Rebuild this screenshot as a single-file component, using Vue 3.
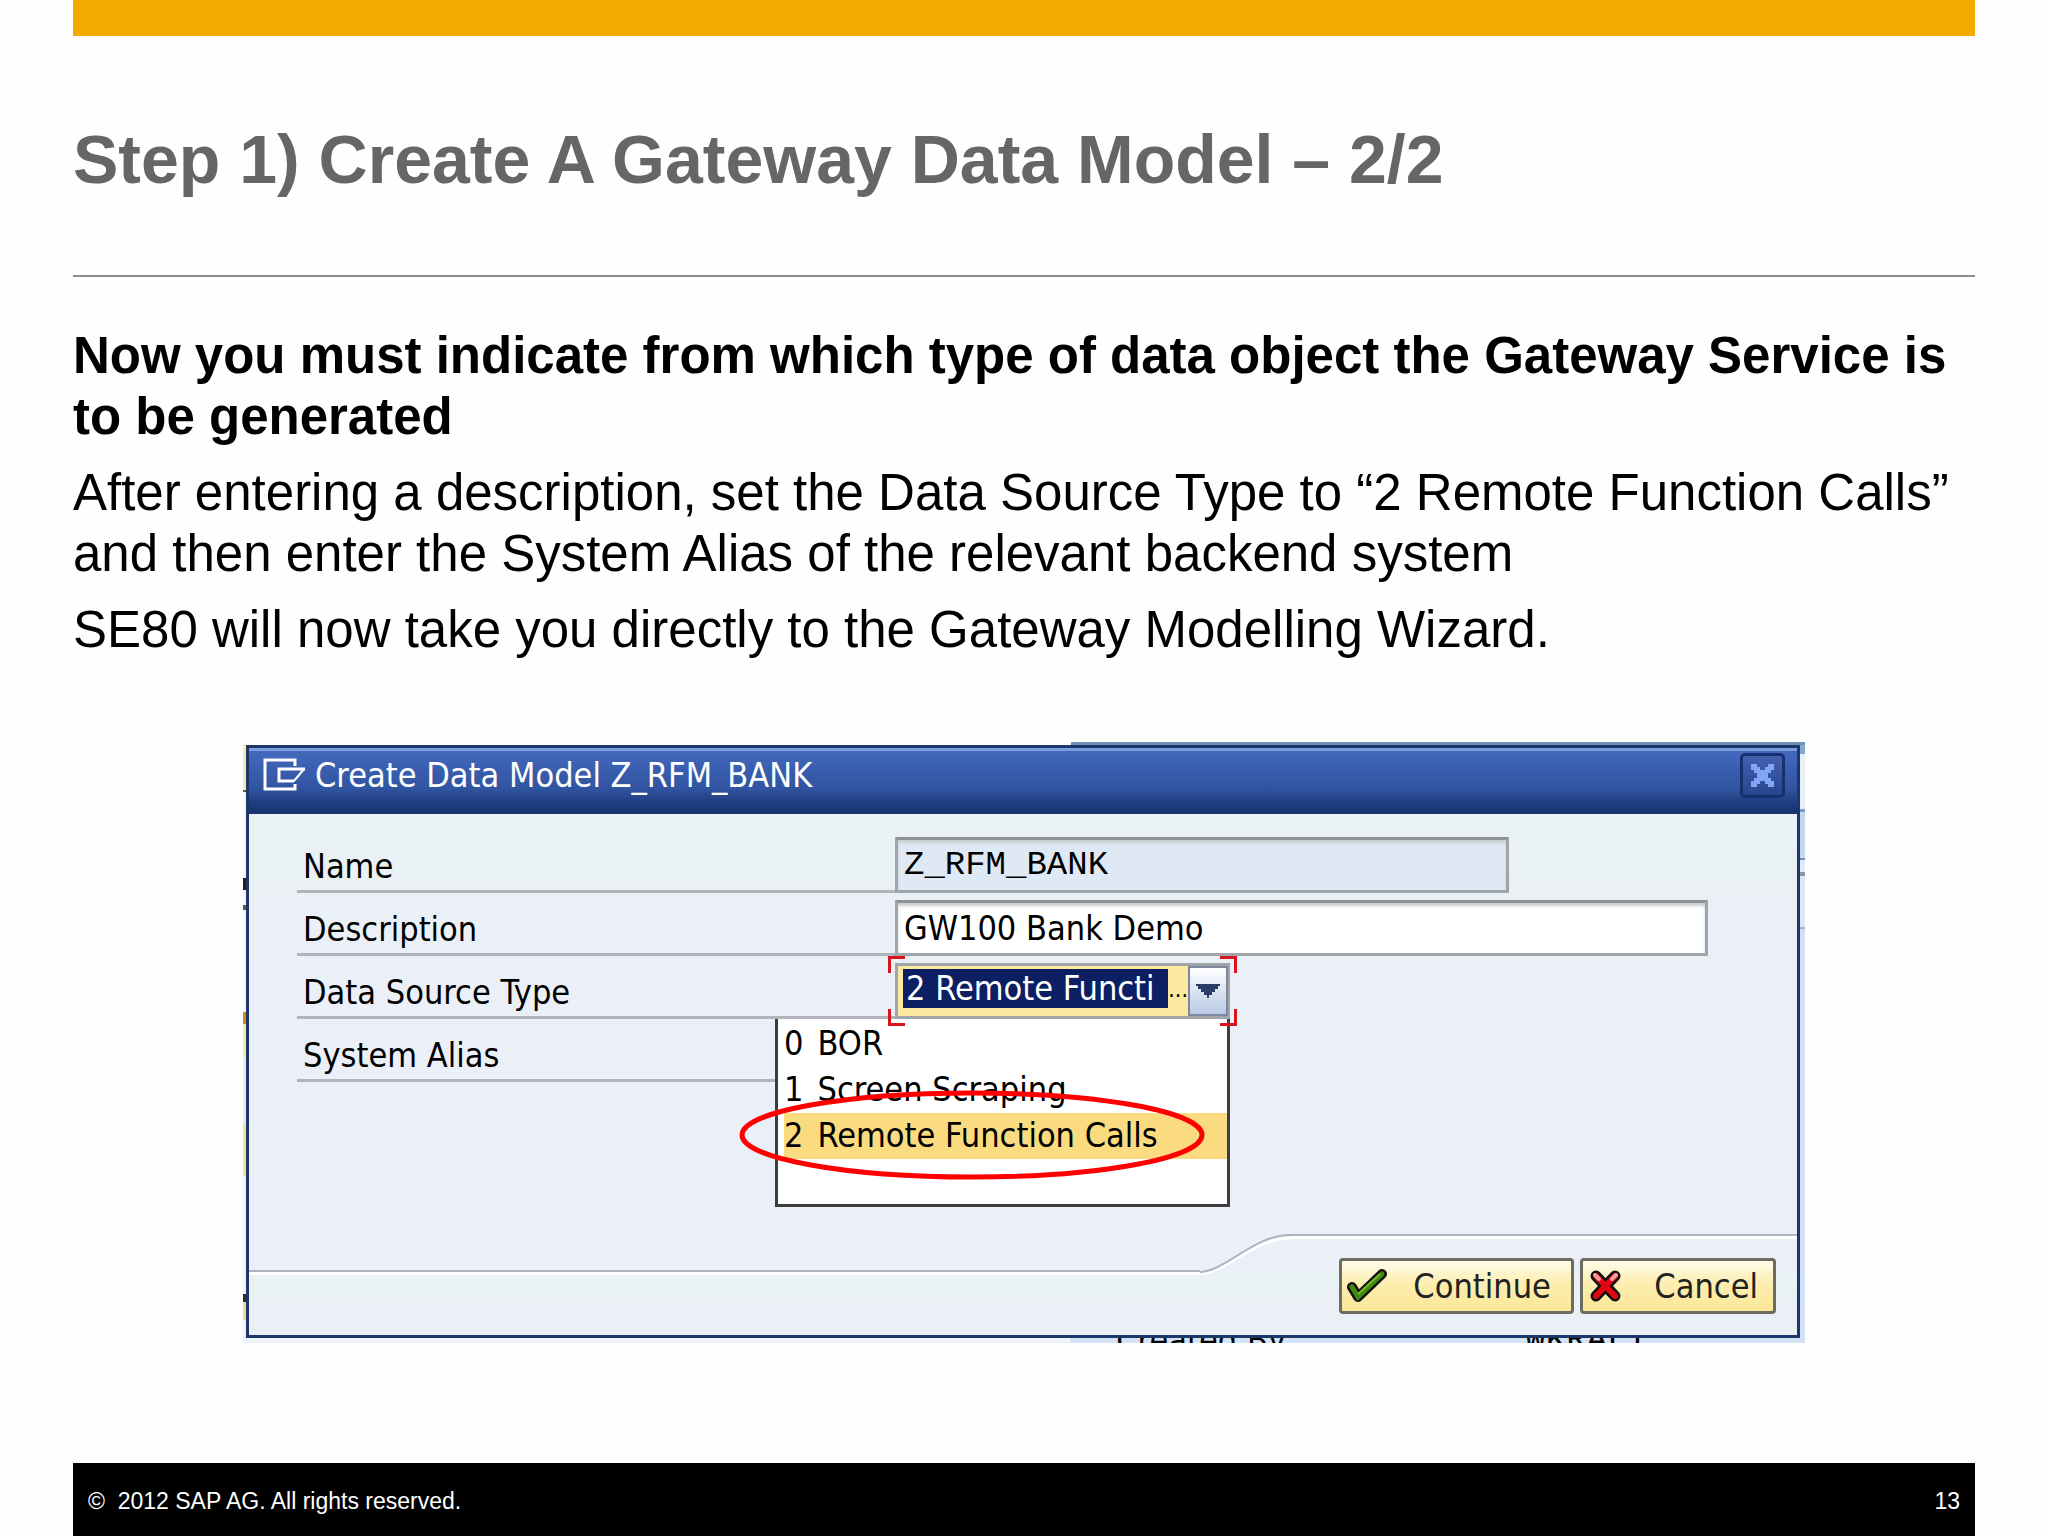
<script setup>
import { ref } from 'vue'

const name = ref('Z_RFM_BANK')
const description = ref('GW100 Bank Demo')
const sourceType = ref('2')
const options = [
  { code: '0', label: 'BOR' },
  { code: '1', label: 'Screen Scraping' },
  { code: '2', label: 'Remote Function Calls' },
]
</script>

<template>
  <main class="slide">
    <div class="accent"></div>
    <header class="heading">
      <h1>Step 1) Create A Gateway Data Model – 2/2</h1>
    </header>

    <section class="copy">
      <p class="lead">Now you must indicate from which type of data object the Gateway Service is to be generated</p>
      <p>After entering a description, set the Data Source Type to “2 Remote Function Calls” and then enter the System Alias of the relevant backend system</p>
      <p>SE80 will now take you directly to the Gateway Modelling Wizard.</p>
    </section>

    <div class="backdrop">
      <form class="dialog" @submit.prevent>
        <div class="titlebar">
          <svg class="glyph" width="42" height="34" viewBox="0 0 42 34" aria-hidden="true">
            <path d="M32 8V2H2v29h30v-5" fill="none" stroke="#fff" stroke-width="3" />
            <path d="M42 11H16v12h15" fill="none" stroke="#fff" stroke-width="3" />
            <path d="M41 11L31 23" fill="none" stroke="#fff" stroke-width="2" />
          </svg>
          <h2>Create Data Model Z_RFM_BANK</h2>
          <button type="button" class="close" aria-label="Close">
            <svg width="23" height="23" viewBox="0 0 23 23" aria-hidden="true">
              <path d="M0 0h6v3h3v3h5v-3h3v-3h6v6h-3v3h-3v5h3v3h3v6h-6v-3h-3v-3h-5v3h-3v3h-6v-6h3v-3h3v-5h-3v-3h-3z" fill="#83a5f8" />
            </svg>
          </button>
        </div>

        <div class="body">
          <div class="row">
            <label for="name">Name</label>
            <input id="name" v-model="name" class="field mono" type="text" readonly />
          </div>
          <div class="row">
            <label for="description">Description</label>
            <input id="description" v-model="description" class="field wide" type="text" />
          </div>
          <div class="row">
            <label for="source">Data Source Type</label>
            <div class="combo">
              <select id="source" v-model="sourceType">
                <option value="2">2 Remote Functi</option>
              </select>
              <span class="dots" aria-hidden="true">...</span>
              <span class="arrow" aria-hidden="true">
                <svg width="24" height="14" viewBox="0 0 24 14"><path d="M0 0h24v2h-2v3h-3v3h-3v3h-3v3h-2v-3h-3v-3h-3v-3h-3v-3h-2z" fill="#2b3d69" /></svg>
              </span>
              <i class="corner tl"></i><i class="corner tr"></i><i class="corner bl"></i><i class="corner br"></i>
              <div class="menu">
                <ul role="listbox" aria-label="Data Source Type">
                  <li v-for="o in options" :key="o.code" role="option" :aria-selected="o.code === sourceType" :class="{ chosen: o.code === sourceType }">
                    <span>{{ o.code }}</span><span>{{ o.label }}</span>
                  </li>
                </ul>
                <svg class="ring" width="466" height="90" viewBox="0 0 466 90" aria-hidden="true">
                  <ellipse cx="233" cy="45" rx="230" ry="42" fill="none" stroke="#f00" stroke-width="5" />
                </svg>
              </div>
            </div>
          </div>
          <div class="row">
            <span class="label">System Alias</span>
          </div>
        </div>

        <div class="actions">
          <div class="low"></div>
          <svg class="slope" width="90" height="42" viewBox="0 0 90 42" aria-hidden="true">
            <path d="M0 40C24 40 54 4 90 4" fill="none" stroke="#fff" stroke-width="3" />
            <path d="M0 38C24 38 54 1 90 1" fill="none" stroke="#adb4bf" stroke-width="2" />
          </svg>
          <div class="high">
            <button type="submit" class="btn primary">
              <svg width="40" height="34" viewBox="0 0 40 34" aria-hidden="true">
                <path d="M5 18l6 10L35 5" fill="none" stroke="#111" stroke-width="10" stroke-linejoin="round" stroke-linecap="round" />
                <path d="M5 18l6 10L35 5" fill="none" stroke="#3f8a10" stroke-width="5" stroke-linecap="round" />
                <path d="M11 25L33 5" fill="none" stroke="#76b82a" stroke-width="2" />
              </svg>
              <span>Continue</span>
            </button>
            <button type="button" class="btn">
              <svg width="40" height="34" viewBox="0 0 40 34" aria-hidden="true">
                <path d="M8 7l19 20M27 7L8 27" stroke="#111" stroke-width="11" stroke-linecap="round" />
                <path d="M8 7l19 20M27 7L8 27" stroke="#e30613" stroke-width="6" stroke-linecap="round" />
                <path d="M7 6l4 4M28 6l-4 4" stroke="#f79a9a" stroke-width="4" stroke-linecap="round" />
              </svg>
              <span>Cancel</span>
            </button>
          </div>
        </div>
      </form>
      <div class="peek" aria-hidden="true">
        <span>Created By</span>
        <span class="user">WKRALT</span>
      </div>
    </div>

    <footer class="footer">
      <span>©&nbsp; 2012 SAP AG. All rights reserved.</span>
      <span>13</span>
    </footer>
  </main>
</template>

<style>
body {
  margin: 0;
  background: #fefefe;
}
</style>

<style scoped>
.slide {
  box-sizing: border-box;
  min-height: 100vh;
  padding: 0 73px;
  display: flex;
  flex-direction: column;
  font-family: "Liberation Sans", Arial, sans-serif;
  color: #000;
}
.accent {
  height: 36px;
  background: #f3ab00;
}
.heading {
  padding: 84px 0 77px;
  border-bottom: 2px solid #8c8c8c;
}
h1 {
  margin: 0;
  font-size: 68px;
  line-height: 78px;
  color: #666;
}
.copy {
  padding-top: 48px;
}
.copy p {
  margin: 0 0 15px;
  font-size: 51px;
  line-height: 61px;
}
.copy .lead {
  font-weight: bold;
}
/* Edges of the window behind the dialog stay visible around it */
.backdrop {
  margin: 67px 170px 0;
  padding: 3px 5px 0 3px;
  background:
    linear-gradient(#6f8fb9, #6f8fb9) right top / 47% 3px no-repeat,
    linear-gradient(#fefefe, #fefefe) left top / 53% 3px no-repeat,
    linear-gradient(#f7ecae 48px, #5a5a5a 48px 50px, #f2f5fb 50px 136px, #222 136px 148px, #f2f5fb 148px 163px, #555 163px 168px, #f2f5fb 168px 270px, #d98b10 270px 282px, #f7ecae 282px 316px, #e6edf8 316px 382px, #f5e394 382px 434px, #eef6fd 434px 552px, #3b2a1d 552px 560px, #f3d9a0 560px 578px, #eef3fb 578px) left / 3px 100% no-repeat,
    linear-gradient(#86a8d0 12px, #e9f0fa 12px 67px, #7b9fc9 67px 70px, #c3daea 70px 116px, #6f8fb0 116px 118px, #dfeafa 118px 130px, #8f939c 130px 134px, #dee6f5 134px 185px, #a9b3c6 185px 187px, #d3dff4 187px) right / 5px 100% no-repeat;
}
.dialog {
  border: 3px solid #1d3768;
  background: #ebeff7;
  font-family: "DejaVu Sans Condensed", "DejaVu Sans", Tahoma, sans-serif;
  font-size: 34px;
}
.titlebar {
  box-sizing: border-box;
  height: 66px;
  padding: 0 12px 15px 14px;
  display: flex;
  align-items: center;
  gap: 10px;
  border-top: 3px solid #7b9ddb;
  background: linear-gradient(#4468bd, #3054a0 60%, #1f3c80 82%, #18326c);
}
h2 {
  flex: 1;
  margin: 0;
  font-size: 34px;
  font-weight: normal;
  line-height: 40px;
  color: #fff;
}
.close {
  width: 45px;
  height: 45px;
  padding: 0;
  display: grid;
  place-items: center;
  border: 3px solid #17306f;
  border-radius: 5px;
  background: linear-gradient(#4560ae, #25458e);
}
.body {
  box-sizing: border-box;
  min-height: 420px;
  padding: 23px 48px;
  display: flex;
  flex-direction: column;
  gap: 7px;
  background: linear-gradient(#e9f2f4, #ebeff7 40%);
}
.row {
  display: flex;
  height: 56px;
}
label,
.label {
  box-sizing: border-box;
  width: 598px;
  padding: 9px 6px 0;
  line-height: 40px;
  border-bottom: 3px solid #b0b5bb;
  color: #000;
}
.field {
  box-sizing: border-box;
  width: 614px;
  height: 56px;
  padding: 0 6px;
  border: 3px solid #a0a5a9;
  border-top-color: #8d9296;
  border-radius: 0;
  outline: 0;
  box-shadow: inset 0 3px 3px #c9ced2;
  background: #fff;
  font: inherit;
  color: #000;
}
.field.wide {
  width: 813px;
}
.field.mono {
  background: #dfe9f5;
}
.field.mono,
.user {
  font-family: "Liberation Mono", "Courier New", monospace;
}
.combo {
  position: relative;
  width: 335px;
  height: 56px;
}
select {
  box-sizing: border-box;
  width: 100%;
  height: 56px;
  padding: 0 42px 6px 8px;
  appearance: none;
  border: 3px solid #a0a5a9;
  border-radius: 0;
  background: linear-gradient(#0c1f63, #0c1f63) 5px 3px / 265px 39px no-repeat #fbe9a0;
  font: inherit;
  color: #fff;
}
.dots {
  position: absolute;
  right: 42px;
  top: 6px;
  line-height: 40px;
  font-size: 23px;
}
.arrow {
  box-sizing: border-box;
  position: absolute;
  right: 2px;
  top: 3px;
  width: 40px;
  height: 50px;
  display: grid;
  place-items: center;
  border: 2px solid #7d889c;
  background: linear-gradient(#fff, #b9c9e6);
  pointer-events: none;
}
.corner {
  position: absolute;
  width: 14px;
  height: 14px;
  border: 0 solid #d8141c;
  pointer-events: none;
  z-index: 2;
}
.tl { left: -7px; top: -7px; border-width: 3px 0 0 3px; }
.tr { right: -7px; top: -7px; border-width: 3px 3px 0 0; }
.bl { left: -7px; bottom: -7px; border-width: 0 0 3px 3px; }
.br { right: -7px; bottom: -7px; border-width: 0 3px 3px 0; }
.menu {
  box-sizing: border-box;
  position: absolute;
  top: 56px;
  right: 0;
  width: 455px;
  height: 188px;
  border: 3px solid #3c3e40;
  border-top: 0;
  background: #fff;
}
ul {
  margin: 0;
  padding: 2px 0 0 6px;
  list-style: none;
}
li {
  height: 46px;
  display: flex;
  gap: 14px;
  line-height: 44px;
}
.chosen {
  background: #fbdb7f;
}
.ring {
  position: absolute;
  left: -39px;
  top: 71px;
}
.actions {
  height: 101px;
  display: flex;
  background: linear-gradient(#ebeff7, #ebeff7 38%, #e9f2f4 40%, #ebeff7);
}
.low {
  box-sizing: border-box;
  flex: 1;
  height: 41px;
  border-bottom: 3px solid #fff;
  background: linear-gradient(#adb4bf, #adb4bf) bottom / 100% 2px no-repeat #ebeff7;
}
.high {
  box-sizing: border-box;
  width: 507px;
  padding: 22px 21px 0 0;
  display: flex;
  justify-content: flex-end;
  align-items: flex-start;
  gap: 6px;
  border-top: 2px solid #adb4bf;
  box-shadow: inset 0 3px #fff;
}
.btn {
  box-sizing: border-box;
  height: 56px;
  padding: 0 15px 0 5px;
  display: flex;
  align-items: center;
  gap: 26px;
  border: 3px solid #6e6c60;
  border-radius: 4px;
  background: linear-gradient(#fffbe9, #fdeeb0 45%, #fbe797);
  font: inherit;
  line-height: 40px;
  color: #222;
}
.primary {
  min-width: 235px;
}
.peek {
  height: 5px;
  padding-left: 56%;
  display: flex;
  gap: 35%;
  overflow: hidden;
  white-space: nowrap;
  background: linear-gradient(90deg, #eff4fc 53%, #d5e3f7 53%);
  font-family: "DejaVu Sans Condensed", "DejaVu Sans", Tahoma, sans-serif;
  font-size: 34px;
  line-height: 5px;
}
.footer {
  margin-top: auto;
  box-sizing: border-box;
  min-height: 73px;
  padding: 3px 15px 0;
  display: flex;
  justify-content: space-between;
  align-items: center;
  background: #000;
  color: #fff;
  font-size: 23px;
}
</style>
